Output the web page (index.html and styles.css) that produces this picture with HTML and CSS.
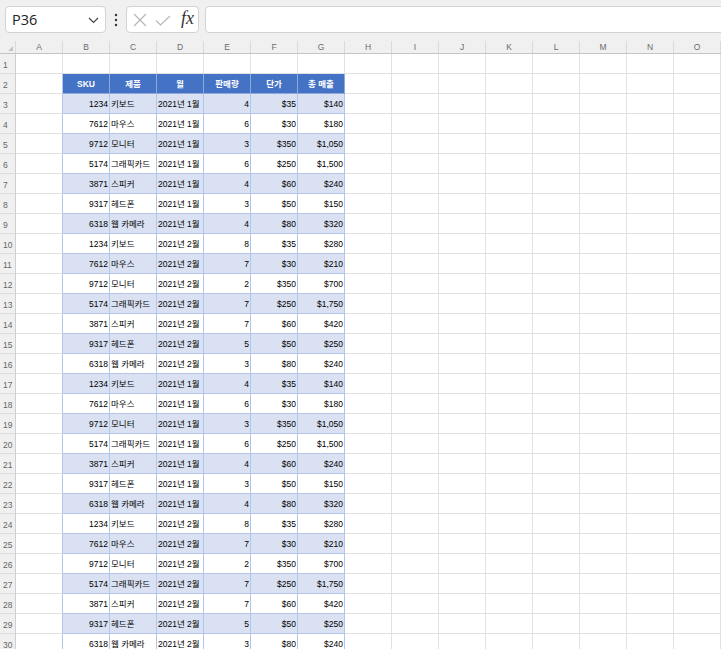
FILE: index.html
```html
<!DOCTYPE html>
<html lang="ko">
<head>
<meta charset="utf-8">
<title>Sheet</title>
<link rel="stylesheet" href="styles.css">
</head>
<body>
<div class="toolbar">
  <div class="namebox">
    <span class="namebox-text">P36</span>
    <svg class="chev" width="11" height="7" viewBox="0 0 11 7"><polyline points="1,1 5.5,5.5 10,1" fill="none" stroke="#444" stroke-width="1.2"/></svg>
  </div>
  <svg class="dots" width="4" height="14" viewBox="0 0 4 14"><circle cx="2" cy="2" r="1.2" fill="#333"/><circle cx="2" cy="7" r="1.2" fill="#333"/><circle cx="2" cy="12" r="1.2" fill="#333"/></svg>
  <div class="fbuttons">
    <svg class="ico-x" width="14" height="14" viewBox="0 0 14 14"><path d="M1 1 L13 13 M13 1 L1 13" stroke="#b5b5b5" stroke-width="1.1" fill="none"/></svg>
    <svg class="ico-check" width="16" height="11" viewBox="0 0 16 11"><polyline points="1,5.5 5.5,10 15,1" fill="none" stroke="#b5b5b5" stroke-width="1.1"/></svg>
    <span class="fx">fx</span>
  </div>
  <div class="finput"></div>
</div>

<div class="colhead">
  <div class="corner"><span class="tri"></span></div>
  <div class="ch">A</div><div class="ch">B</div><div class="ch">C</div><div class="ch">D</div><div class="ch">E</div><div class="ch">F</div><div class="ch">G</div><div class="ch">H</div><div class="ch">I</div><div class="ch">J</div><div class="ch">K</div><div class="ch">L</div><div class="ch">M</div><div class="ch">N</div><div class="ch">O</div>
</div>

<div class="sheet">
  <div class="row"><div class="rh">1</div><div class="c"></div><div class="c"></div><div class="c"></div><div class="c"></div><div class="c"></div><div class="c"></div><div class="c"></div></div>
  <div class="row"><div class="rh">2</div><div class="c edge"></div><div class="c th">SKU</div><div class="c th">제품</div><div class="c th">월</div><div class="c th">판매량</div><div class="c th">단가</div><div class="c th">총 매출</div></div>

  <div class="row band"><div class="rh">3</div><div class="c edge"></div><div class="c t num">1234</div><div class="c t">키보드</div><div class="c t">2021년 1월</div><div class="c t num">4</div><div class="c t num">$35</div><div class="c t num">$140</div></div>
  <div class="row"><div class="rh">4</div><div class="c edge"></div><div class="c t num">7612</div><div class="c t">마우스</div><div class="c t">2021년 1월</div><div class="c t num">6</div><div class="c t num">$30</div><div class="c t num">$180</div></div>
  <div class="row band"><div class="rh">5</div><div class="c edge"></div><div class="c t num">9712</div><div class="c t">모니터</div><div class="c t">2021년 1월</div><div class="c t num">3</div><div class="c t num">$350</div><div class="c t num">$1,050</div></div>
  <div class="row"><div class="rh">6</div><div class="c edge"></div><div class="c t num">5174</div><div class="c t">그래픽카드</div><div class="c t">2021년 1월</div><div class="c t num">6</div><div class="c t num">$250</div><div class="c t num">$1,500</div></div>
  <div class="row band"><div class="rh">7</div><div class="c edge"></div><div class="c t num">3871</div><div class="c t">스피커</div><div class="c t">2021년 1월</div><div class="c t num">4</div><div class="c t num">$60</div><div class="c t num">$240</div></div>
  <div class="row"><div class="rh">8</div><div class="c edge"></div><div class="c t num">9317</div><div class="c t">헤드폰</div><div class="c t">2021년 1월</div><div class="c t num">3</div><div class="c t num">$50</div><div class="c t num">$150</div></div>
  <div class="row band"><div class="rh">9</div><div class="c edge"></div><div class="c t num">6318</div><div class="c t">웹 카메라</div><div class="c t">2021년 1월</div><div class="c t num">4</div><div class="c t num">$80</div><div class="c t num">$320</div></div>
  <div class="row"><div class="rh">10</div><div class="c edge"></div><div class="c t num">1234</div><div class="c t">키보드</div><div class="c t">2021년 2월</div><div class="c t num">8</div><div class="c t num">$35</div><div class="c t num">$280</div></div>
  <div class="row band"><div class="rh">11</div><div class="c edge"></div><div class="c t num">7612</div><div class="c t">마우스</div><div class="c t">2021년 2월</div><div class="c t num">7</div><div class="c t num">$30</div><div class="c t num">$210</div></div>
  <div class="row"><div class="rh">12</div><div class="c edge"></div><div class="c t num">9712</div><div class="c t">모니터</div><div class="c t">2021년 2월</div><div class="c t num">2</div><div class="c t num">$350</div><div class="c t num">$700</div></div>
  <div class="row band"><div class="rh">13</div><div class="c edge"></div><div class="c t num">5174</div><div class="c t">그래픽카드</div><div class="c t">2021년 2월</div><div class="c t num">7</div><div class="c t num">$250</div><div class="c t num">$1,750</div></div>
  <div class="row"><div class="rh">14</div><div class="c edge"></div><div class="c t num">3871</div><div class="c t">스피커</div><div class="c t">2021년 2월</div><div class="c t num">7</div><div class="c t num">$60</div><div class="c t num">$420</div></div>
  <div class="row band"><div class="rh">15</div><div class="c edge"></div><div class="c t num">9317</div><div class="c t">헤드폰</div><div class="c t">2021년 2월</div><div class="c t num">5</div><div class="c t num">$50</div><div class="c t num">$250</div></div>
  <div class="row"><div class="rh">16</div><div class="c edge"></div><div class="c t num">6318</div><div class="c t">웹 카메라</div><div class="c t">2021년 2월</div><div class="c t num">3</div><div class="c t num">$80</div><div class="c t num">$240</div></div>

  <div class="row band"><div class="rh">17</div><div class="c edge"></div><div class="c t num">1234</div><div class="c t">키보드</div><div class="c t">2021년 1월</div><div class="c t num">4</div><div class="c t num">$35</div><div class="c t num">$140</div></div>
  <div class="row"><div class="rh">18</div><div class="c edge"></div><div class="c t num">7612</div><div class="c t">마우스</div><div class="c t">2021년 1월</div><div class="c t num">6</div><div class="c t num">$30</div><div class="c t num">$180</div></div>
  <div class="row band"><div class="rh">19</div><div class="c edge"></div><div class="c t num">9712</div><div class="c t">모니터</div><div class="c t">2021년 1월</div><div class="c t num">3</div><div class="c t num">$350</div><div class="c t num">$1,050</div></div>
  <div class="row"><div class="rh">20</div><div class="c edge"></div><div class="c t num">5174</div><div class="c t">그래픽카드</div><div class="c t">2021년 1월</div><div class="c t num">6</div><div class="c t num">$250</div><div class="c t num">$1,500</div></div>
  <div class="row band"><div class="rh">21</div><div class="c edge"></div><div class="c t num">3871</div><div class="c t">스피커</div><div class="c t">2021년 1월</div><div class="c t num">4</div><div class="c t num">$60</div><div class="c t num">$240</div></div>
  <div class="row"><div class="rh">22</div><div class="c edge"></div><div class="c t num">9317</div><div class="c t">헤드폰</div><div class="c t">2021년 1월</div><div class="c t num">3</div><div class="c t num">$50</div><div class="c t num">$150</div></div>
  <div class="row band"><div class="rh">23</div><div class="c edge"></div><div class="c t num">6318</div><div class="c t">웹 카메라</div><div class="c t">2021년 1월</div><div class="c t num">4</div><div class="c t num">$80</div><div class="c t num">$320</div></div>
  <div class="row"><div class="rh">24</div><div class="c edge"></div><div class="c t num">1234</div><div class="c t">키보드</div><div class="c t">2021년 2월</div><div class="c t num">8</div><div class="c t num">$35</div><div class="c t num">$280</div></div>
  <div class="row band"><div class="rh">25</div><div class="c edge"></div><div class="c t num">7612</div><div class="c t">마우스</div><div class="c t">2021년 2월</div><div class="c t num">7</div><div class="c t num">$30</div><div class="c t num">$210</div></div>
  <div class="row"><div class="rh">26</div><div class="c edge"></div><div class="c t num">9712</div><div class="c t">모니터</div><div class="c t">2021년 2월</div><div class="c t num">2</div><div class="c t num">$350</div><div class="c t num">$700</div></div>
  <div class="row band"><div class="rh">27</div><div class="c edge"></div><div class="c t num">5174</div><div class="c t">그래픽카드</div><div class="c t">2021년 2월</div><div class="c t num">7</div><div class="c t num">$250</div><div class="c t num">$1,750</div></div>
  <div class="row"><div class="rh">28</div><div class="c edge"></div><div class="c t num">3871</div><div class="c t">스피커</div><div class="c t">2021년 2월</div><div class="c t num">7</div><div class="c t num">$60</div><div class="c t num">$420</div></div>
  <div class="row band"><div class="rh">29</div><div class="c edge"></div><div class="c t num">9317</div><div class="c t">헤드폰</div><div class="c t">2021년 2월</div><div class="c t num">5</div><div class="c t num">$50</div><div class="c t num">$250</div></div>
  <div class="row"><div class="rh">30</div><div class="c edge"></div><div class="c t num">6318</div><div class="c t">웹 카메라</div><div class="c t">2021년 2월</div><div class="c t num">3</div><div class="c t num">$80</div><div class="c t num">$240</div></div>
</div>
</body>
</html>
```
FILE: styles.css
```css
html, body {
  margin: 0;
  padding: 0;
}
body {
  width: 721px;
  height: 649px;
  overflow: hidden;
  background: #f0f0f0;
  font-family: "Liberation Sans", "Noto Sans CJK KR", sans-serif;
  color: #000;
}

/* ---------- formula toolbar ---------- */
.toolbar {
  height: 41px;
  box-sizing: border-box;
  padding: 6px 0 0 5px;
  display: flex;
  align-items: flex-start;
  background: #f0f0f0;
  overflow: hidden;
}
.toolbar > * {
  flex: none;
}
.namebox {
  width: 101px;
  height: 27px;
  box-sizing: border-box;
  background: #fff;
  border: 1px solid #d3d3d3;
  border-radius: 4px;
  display: flex;
  align-items: center;
  justify-content: space-between;
  padding: 0 6px 0 6px;
}
.namebox-text {
  font-family: "Open Sans", "Noto Sans", sans-serif;
  font-size: 14.5px;
  color: #222;
}
.chev {
  display: block;
  margin-top: 1px;
}
.dots {
  display: block;
  margin: 7px 8px 0 8px;
}
.fbuttons {
  width: 73px;
  height: 27px;
  box-sizing: border-box;
  background: #fff;
  border: 1px solid #d3d3d3;
  border-radius: 4px;
  display: flex;
  align-items: center;
  padding: 0 0 0 6px;
}
.ico-x {
  display: block;
}
.ico-check {
  display: block;
  margin-left: 8px;
  margin-top: 1px;
}
.fx {
  font-family: "Liberation Serif", "DejaVu Serif", serif;
  font-style: italic;
  font-size: 18px;
  color: #333;
  margin-left: 10px;
  margin-top: -2px;
}
.finput {
  margin-left: 6px;
  width: 540px;
  height: 27px;
  box-sizing: border-box;
  background: #fff;
  border: 1px solid #d3d3d3;
  border-radius: 4px;
}

/* ---------- column header ---------- */
.colhead {
  display: grid;
  grid-template-columns: 16px repeat(15, 47px);
  height: 13px;
  box-sizing: border-box;
  border-bottom: 1px solid #c4c4c4;
  background: #f0f0f0;
}
.corner {
  box-sizing: border-box;
  border-right: 1px solid #dadada;
  display: flex;
  align-items: flex-end;
  justify-content: flex-end;
  padding: 0 2px 2px 0;
}
.tri {
  width: 0;
  height: 0;
  border-left: 5px solid transparent;
  border-bottom: 5px solid #c3c3c3;
}
.ch {
  box-sizing: border-box;
  border-right: 1px solid #dadada;
  text-align: center;
  font-size: 8.5px;
  line-height: 12px;
  color: #6b6b6b;
}

/* ---------- sheet grid ---------- */
.sheet {
  background-color: #fff;
  background-image:
    repeating-linear-gradient(to right, transparent 0 46px, #e1e1e1 46px 47px),
    repeating-linear-gradient(to bottom, transparent 0 19px, #e1e1e1 19px 20px);
  background-position: 16px 0, 0 0;
  height: 595px;
}
.row {
  display: grid;
  grid-template-columns: 16px repeat(7, 47px);
  height: 20px;
}
.rh {
  box-sizing: border-box;
  background: #f0f0f0;
  border-right: 1px solid #cfcfcf;
  border-bottom: 1px solid #dcdcdc;
  font-size: 8.5px;
  line-height: 22px;
  color: #666;
  padding-left: 3px;
  white-space: nowrap;
  overflow: hidden;
}
.c {
  box-sizing: border-box;
  border-right: 1px solid #e1e1e1;
  border-bottom: 1px solid #e1e1e1;
  font-size: 8.5px;
  line-height: 20px;
  padding: 0 1px 0 1px;
  white-space: nowrap;
  overflow: hidden;
}
.c.edge {
  border-right-color: #b4c6e7;
}
.c.t {
  background: #fff;
  border-right-color: #b4c6e7;
  border-bottom-color: #b4c6e7;
}
.band .c.t {
  background: #d9e1f2;
}
.c.num {
  text-align: right;
}
.c.th {
  background: #4472c4;
  color: #fff;
  font-weight: bold;
  text-align: center;
  border-right-color: #8eaadb;
  border-bottom-color: #8eaadb;
}
```
